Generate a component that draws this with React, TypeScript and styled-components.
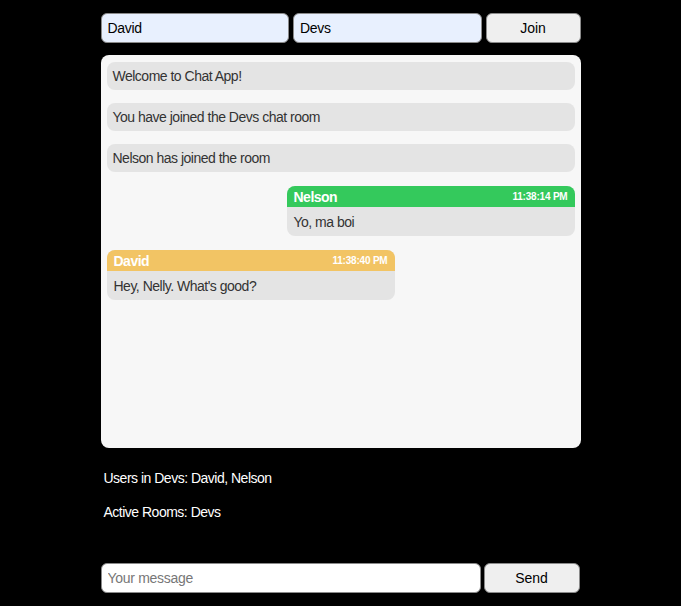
import styled, { createGlobalStyle } from 'styled-components'

const GlobalStyle = createGlobalStyle`
  html, body {
    margin: 0;
    background: #000;
    font-family: "Liberation Sans", Arial, sans-serif;
  }
`

const Page = styled.div`
  width: 480px;
  margin: 0 auto;
  padding-top: 13px;
`

const Row = styled.div`
  display: flex;
  gap: 4px;
  height: 30px;
`

const TextInput = styled.input<{ $filled?: boolean }>`
  flex: 1;
  min-width: 0;
  box-sizing: border-box;
  height: 30px;
  border: 1px solid #8a8a8a;
  border-radius: 6px;
  padding: 0 6px;
  font-family: inherit;
  font-size: 14px;
  letter-spacing: -0.3px;
  color: #000;
  background: ${(p) => (p.$filled ? '#e8f0fe' : '#fff')};
  outline: none;

  &::placeholder {
    color: #777;
  }
`

const Button = styled.button`
  flex: 0 0 95px;
  box-sizing: border-box;
  height: 30px;
  border: 1px solid #8a8a8a;
  border-radius: 6px;
  background: #efefef;
  font-family: inherit;
  font-size: 14px;
  color: #000;
`

const ChatBox = styled.div`
  margin-top: 12px;
  height: 393px;
  box-sizing: border-box;
  background: #f7f7f7;
  border-radius: 8px;
  padding: 7px 6px;
  display: flex;
  flex-direction: column;
  gap: 13px;
  letter-spacing: -0.5px;
`

const Notice = styled.div`
  background: #e4e4e4;
  border-radius: 8px;
  height: 28px;
  line-height: 29px;
  padding: 0 6px;
  font-size: 14px;
  color: #333;
`

const Bubble = styled.div<{ $mine?: boolean }>`
  width: 288px;
  margin-top: 1px;
  align-self: ${(p) => (p.$mine ? 'flex-start' : 'flex-end')};
  border-radius: 8px;
  overflow: hidden;
  background: #e4e4e4;
`

const BubbleHead = styled.div<{ $color: string }>`
  display: flex;
  justify-content: space-between;
  align-items: center;
  height: 21px;
  padding: 0 7px;
  background: ${(p) => p.$color};
  color: #fff;
  font-weight: bold;
`

const Author = styled.span`
  font-size: 14px;
`

const Time = styled.span`
  font-size: 10px;
  letter-spacing: -0.2px;
`

const BubbleBody = styled.div`
  height: 29px;
  line-height: 31px;
  padding: 0 7px;
  font-size: 14px;
  color: #333;
`

const Info = styled.p`
  margin: 22px 0 0 3px;
  color: #fff;
  font-size: 14px;
  line-height: 16px;
  letter-spacing: -0.5px;

  & + & {
    margin-top: 18px;
  }
`

const Footer = styled(Row)`
  margin-top: 43px;
  gap: 3px;

  ${TextInput} {
    flex: 0 0 380px;
  }

  ${Button} {
    flex: 0 0 96px;
  }
`

export default function App() {
  return (
    <>
      <GlobalStyle />
      <Page>
        <Row>
          <TextInput $filled defaultValue="David" />
          <TextInput $filled defaultValue="Devs" />
          <Button>Join</Button>
        </Row>

        <ChatBox>
          <Notice>Welcome to Chat App!</Notice>
          <Notice>You have joined the Devs chat room</Notice>
          <Notice>Nelson has joined the room</Notice>

          <Bubble>
            <BubbleHead $color="#34c95c">
              <Author>Nelson</Author>
              <Time>11:38:14 PM</Time>
            </BubbleHead>
            <BubbleBody>Yo, ma boi</BubbleBody>
          </Bubble>

          <Bubble $mine>
            <BubbleHead $color="#f2c464">
              <Author>David</Author>
              <Time>11:38:40 PM</Time>
            </BubbleHead>
            <BubbleBody>Hey, Nelly. What's good?</BubbleBody>
          </Bubble>
        </ChatBox>

        <Info>Users in Devs: David, Nelson</Info>
        <Info>Active Rooms: Devs</Info>

        <Footer>
          <TextInput placeholder="Your message" />
          <Button>Send</Button>
        </Footer>
      </Page>
    </>
  )
}
